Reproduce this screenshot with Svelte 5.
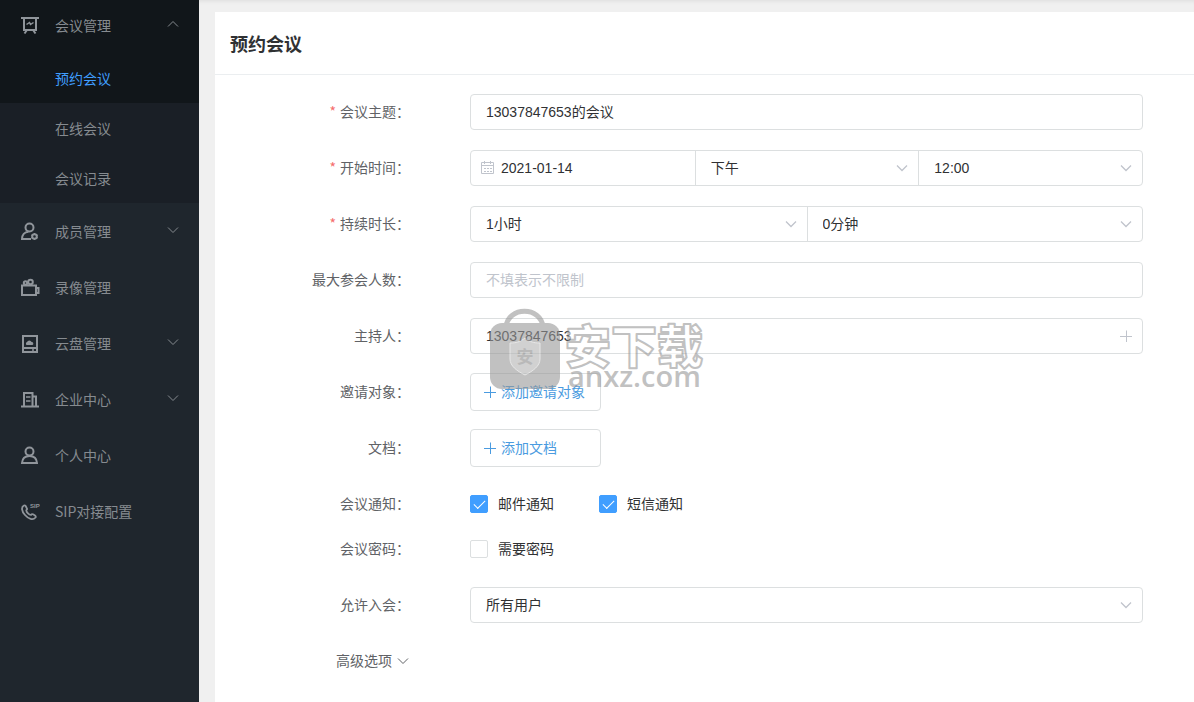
<script>
	let subject = "13037847653的会议";
	let date = "2021-01-14";
	let host = "13037847653";
	let limit = "";
	let mail = true;
	let sms = true;
	let needPassword = false;
	let open = true;

	const subMenu = ["预约会议", "在线会议", "会议记录"];
	let current = "预约会议";

	const menu = [
		{ icon: "members", text: "成员管理", arrow: true },
		{ icon: "record", text: "录像管理" },
		{ icon: "disk", text: "云盘管理", arrow: true },
		{ icon: "company", text: "企业中心", arrow: true },
		{ icon: "person", text: "个人中心" },
		{ icon: "sip", text: "SIP对接配置" },
	];
</script>

{#snippet chevron()}
	<svg class="chevron" viewBox="0 0 12 8" width="12" height="8" aria-hidden="true">
		<path d="M1 1.5l5 5 5-5" />
	</svg>
{/snippet}

{#snippet plus()}
	<svg class="plus" viewBox="0 0 12 12" width="12" height="12" aria-hidden="true">
		<path d="M6.5 0.5v12M0 6.5h12" />
	</svg>
{/snippet}

<div class="page">
	<aside>
		<nav>
			<div class="group">
				<button class="item head" aria-expanded={open} on:click={() => (open = !open)}>
					<svg class="icon" viewBox="0 0 20 20" aria-hidden="true">
						<path d="M1 3h18M4 3v12h12V3M7 15l-2.500 3.500M13 15l2.500 3.500" />
						<path class="thin" d="M6.500 9.500l3-2 1 2 3-2" />
					</svg>
					<span>会议管理</span>
					<span class="arrow" class:up={open}>{@render chevron()}</span>
				</button>
				{#if open}
					{#each subMenu as sub}
						<a
							href="#{sub}"
							class="sub"
							class:active={current == sub}
							on:click={() => (current = sub)}>{sub}</a
						>
					{/each}
				{/if}
			</div>

			{#each menu as item}
				<button class="item">
					<svg class="icon" viewBox="0 0 20 20" aria-hidden="true">
						{#if item.icon == "members"}
							<circle cx="9.500" cy="6.500" r="4" />
							<path d="M11 18H2c0-4 2.500-7 6.500-7.300" />
							<circle cx="14.500" cy="15.500" r="2.300" />
							<path class="thin" d="M14.500 12v1M14.500 18v1M11.500 14l1 .5M16.500 16.500l1 .5M17.500 14l-1 .5M12.500 16.500l-1 .5" />
						{:else if item.icon == "record"}
							<path d="M2 8.500h14V18H2zM16 11h2.500v5H16" />
							<circle cx="5.500" cy="6" r="1.700" />
							<circle cx="10.500" cy="5" r="2.300" />
						{:else if item.icon == "disk"}
							<path d="M3 3h14v16H3zM3 15h14" />
							<path class="thin" d="M13 15v4" />
							<path class="solid" d="M6.500 12a1.800 1.800 0 0 1 .5-3 2.500 2.500 0 0 1 4.600 0 1.600 1.600 0 0 1 .9 3z" />
						{:else if item.icon == "company"}
							<path d="M1 17.500h18M4 17V4h8.500v13M12.500 7.500H16V17" />
							<path class="thin" d="M6 8h4.500M6 12h4.500" />
						{:else if item.icon == "person"}
							<circle cx="9.500" cy="6.500" r="4" />
							<path d="M2 18c.3-4.500 3-7 7.500-7s7.200 2.500 7.500 7z" />
						{:else}
							<path class="phone" d="M4 4.500C1 6 1.500 10 5 14s8 5.500 10.500 2.500c.5-.8.200-1.500-.5-2l-2-1.200c-.8-.4-1.500-.2-2 .6-2 .2-4.500-2.500-4.700-4.600.8-.7 1-1.500.4-2.300L5.500 4.800c-.4-.5-.9-.6-1.500-.3z" />
							<text x="10" y="7">SIP</text>
						{/if}
					</svg>
					<span>{item.text}</span>
					{#if item.arrow}
						<span class="arrow">{@render chevron()}</span>
					{/if}
				</button>
			{/each}
		</nav>
	</aside>

	<main>
		<section class="card">
			<h1>预约会议</h1>

			<form on:submit|preventDefault>
				<div class="row">
					<label class="label required" for="subject">会议主题：</label>
					<div class="box">
						<input id="subject" type="text" bind:value={subject} />
					</div>
				</div>

				<div class="row">
					<label class="label required" for="date">开始时间：</label>
					<div class="box">
						<div class="cell date">
							<svg viewBox="0 0 14 14" width="14" height="14" aria-hidden="true">
								<path d="M.5 1.500h12v11H.5zM.5 4.500h12M3.500 0v3M9.500 0v3" />
								<path d="M3 7.500h2M6 7.500h2M9 7.500h2M3 10.500h2M6 10.500h2M9 10.500h2" />
							</svg>
							<input id="date" type="text" bind:value={date} />
						</div>
						<div class="cell">
							<select aria-label="上午或下午">
								<option>下午</option>
							</select>
							{@render chevron()}
						</div>
						<div class="cell">
							<select aria-label="时刻">
								<option>12:00</option>
							</select>
							{@render chevron()}
						</div>
					</div>
				</div>

				<div class="row">
					<label class="label required" for="hours">持续时长：</label>
					<div class="box">
						<div class="cell">
							<select id="hours">
								<option>1小时</option>
							</select>
							{@render chevron()}
						</div>
						<div class="cell">
							<select aria-label="分钟">
								<option>0分钟</option>
							</select>
							{@render chevron()}
						</div>
					</div>
				</div>

				<div class="row">
					<label class="label" for="limit">最大参会人数：</label>
					<div class="box">
						<input id="limit" type="text" placeholder="不填表示不限制" bind:value={limit} />
					</div>
				</div>

				<div class="row">
					<label class="label" for="host">主持人：</label>
					<div class="box">
						<div class="cell">
							<input id="host" type="text" bind:value={host} />
							<button type="button" class="pick" aria-label="选择主持人">{@render plus()}</button>
						</div>
					</div>

					<!-- site watermark, lies over the fields -->
					<svg class="watermark" viewBox="0 0 220 90" width="220" height="90" aria-hidden="true">
						<path class="handle" d="M17 18C19-3 52-3 54 18" />
						<rect x="1" y="14" width="70" height="66" rx="12" />
						<path class="shield" d="M36 29c5 4 9 5 15 5v16c0 7-7 12-15 16-8-4-15-9-15-16V34c6 0 10-1 15-5z" />
						<text class="seal" x="36" y="54" text-anchor="middle">安</text>
						<text class="name" x="76" y="54">安下载</text>
						<text class="site" x="79" y="78">anxz.com</text>
					</svg>
				</div>

				<div class="row">
					<span class="label">邀请对象：</span>
					<button type="button" class="add">{@render plus()}<span>添加邀请对象</span></button>
				</div>

				<div class="row">
					<span class="label">文档：</span>
					<button type="button" class="add">{@render plus()}<span>添加文档</span></button>
				</div>

				<div class="row tight">
					<span class="label">会议通知：</span>
					<div class="checks">
						<label><input type="checkbox" bind:checked={mail} /><span>邮件通知</span></label>
						<label><input type="checkbox" bind:checked={sms} /><span>短信通知</span></label>
					</div>
				</div>

				<div class="row">
					<span class="label">会议密码：</span>
					<div class="checks">
						<label><input type="checkbox" bind:checked={needPassword} /><span>需要密码</span></label>
					</div>
				</div>

				<div class="row">
					<label class="label" for="allow">允许入会：</label>
					<div class="box">
						<div class="cell">
							<select id="allow">
								<option>所有用户</option>
							</select>
							{@render chevron()}
						</div>
					</div>
				</div>

				<button type="button" class="more"><span>高级选项</span>{@render chevron()}</button>
			</form>
		</section>
	</main>
</div>

<style>
	:global(body) {
		margin: 0;
		background: #f0f0f0;
	}

	* {
		box-sizing: border-box;
	}

	.page {
		display: flex;
		min-height: 100vh;
		font-family: "Noto Sans CJK SC", sans-serif;
		font-size: 14px;
		line-height: 20px;
		color: #303133;
	}

	button,
	input,
	select {
		font: inherit;
		color: inherit;
		margin: 0;
		padding: 0;
		border: 0;
		background: none;
	}

	button {
		cursor: pointer;
	}

	svg {
		fill: none;
		stroke: currentColor;
		flex: none;
	}

	/* sidebar */
	aside {
		flex: none;
		width: 199px;
		background: #1f262d;
		color: #868b90;
	}

	.group {
		background: #1a1f26;
	}

	.item {
		display: flex;
		align-items: center;
		width: 100%;
		height: 56px;
		padding: 0 20px;
		gap: 15px;
		text-align: left;
	}

	.head {
		height: 53px;
		padding-bottom: 3px;
		background: #11161a;
	}

	.icon {
		width: 20px;
		height: 20px;
		stroke-width: 2;
		color: #90959b;
	}

	.icon .thin {
		stroke-width: 1.5;
	}

	.icon .phone {
		stroke-width: 1.8;
	}

	.icon .solid {
		fill: currentColor;
		stroke: none;
	}

	.icon text {
		fill: currentColor;
		stroke: none;
		font: bold 6px "Liberation Sans", sans-serif;
	}

	.arrow {
		display: flex;
		margin-left: auto;
		padding-bottom: 2px;
	}

	.arrow.up {
		transform: rotate(180deg);
		padding: 2px 0 0;
	}

	.sub {
		display: block;
		padding-left: 55px;
		line-height: 50px;
		color: inherit;
		text-decoration: none;
	}

	.sub.active {
		background: #11161a;
		color: #409eff;
	}

	/* content */
	main {
		flex: 1;
		display: flex;
		padding: 12px 0 0 16px;
		box-shadow: inset 0 4px 4px -3px #dcdcdc;
	}

	.card {
		flex: 1;
		background: #fff;
	}

	h1 {
		margin: 0;
		padding: 18px 15px;
		border-bottom: 1px solid #ebeef0;
		font-size: 18px;
		line-height: 26px;
	}

	form {
		padding: 19px 51px 20px 0;
	}

	.row {
		position: relative;
		display: flex;
		align-items: center;
		height: 36px;
		margin-bottom: 20px;
	}

	.row.tight {
		margin-bottom: 9px;
	}

	.label {
		flex: none;
		width: 195px;
		margin-right: 60px;
		text-align: right;
		color: #606266;
	}

	.label,
	.add span,
	.checks span,
	.more span {
		padding-bottom: 2px;
	}

	.required::before {
		content: "*";
		margin-right: 4px;
		color: #f56c6c;
	}

	.box {
		flex: 1;
		display: grid;
		grid-auto-flow: column;
		grid-auto-columns: minmax(0, 1fr);
		height: 36px;
		border: 1px solid #dcdfe0;
		border-radius: 4px;
		font-family: "Liberation Sans", "Noto Sans CJK SC", sans-serif;
	}

	.box input,
	.box select {
		flex: 1;
		min-width: 0;
		padding-left: 15px;
		outline: 0;
		appearance: none;
	}

	.box input::placeholder {
		color: #c0c4cc;
	}

	.cell {
		display: flex;
		align-items: center;
		padding-right: 10px;
	}

	.cell + .cell {
		border-left: 1px solid #dcdfe0;
	}

	.cell select {
		align-self: stretch;
	}

	.cell svg,
	.pick {
		color: #c0c4cc;
	}

	.cell .chevron {
		stroke-width: 1.3;
	}

	.date {
		padding-left: 10px;
	}

	.cell.date input {
		padding-left: 6px;
	}

	.pick {
		display: flex;
	}

	.add {
		display: flex;
		align-items: center;
		gap: 5px;
		width: 131px;
		height: 38px;
		padding-left: 13px;
		border: 1px solid #dcdfe0;
		border-radius: 4px;
		color: #4a9be0;
	}

	.checks {
		display: flex;
		gap: 45px;
	}

	.checks label {
		display: flex;
		align-items: center;
		gap: 10px;
	}

	.checks input {
		appearance: none;
		display: grid;
		place-items: center;
		width: 18px;
		height: 18px;
		border: 1px solid #dcdfe0;
		border-radius: 2px;
	}

	.checks input:checked {
		background: #409eff;
		border-color: #409eff;
	}

	.checks input:checked::before {
		content: "";
		width: 10px;
		height: 5px;
		border: solid #fff;
		border-width: 0 0 1px 1px;
		transform: translateY(-1px) rotate(-45deg);
	}

	.more {
		display: flex;
		align-items: center;
		gap: 5px;
		height: 36px;
		margin-left: 121px;
		color: #606266;
	}

	.watermark {
		position: absolute;
		z-index: 1;
		top: -9px;
		left: 274px;
		overflow: visible;
		opacity: 0.6;
		pointer-events: none;
		stroke: none;
		fill: #989898;
	}

	.watermark .handle {
		fill: none;
		stroke: #989898;
		stroke-width: 5;
	}

	.watermark .shield {
		fill: #b4b4b4;
		stroke: #d8d8d8;
		stroke-width: 1;
	}

	.watermark .seal {
		font-size: 17px;
		font-weight: bold;
		fill: #8c8c8c;
	}

	.watermark .name {
		font-size: 46px;
		font-weight: 900;
		fill: #fff;
		stroke: #989898;
		stroke-width: 2;
		stroke-linejoin: round;
	}

	.watermark .site {
		font-family: "Open Sans", sans-serif;
		font-size: 29px;
		font-weight: 600;
	}
</style>
